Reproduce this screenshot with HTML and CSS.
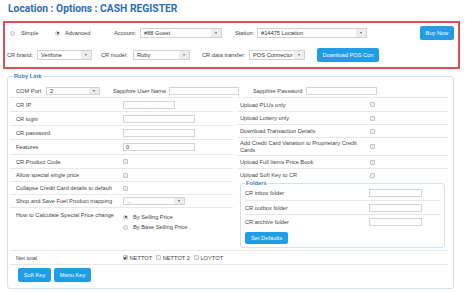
FILE: index.html
```html
<!DOCTYPE html>
<html>
<head>
<meta charset="utf-8">
<link rel="stylesheet" href="styles.css">
</head>
<body>
<h1 class="title">Location : Options : CASH REGISTER</h1>

<div class="redbox">
  <div class="rrow r1">
    <span class="opt o-simple"><span class="radio"></span>Simple</span>
    <span class="opt o-adv"><span class="radio on"></span>Advanced</span>
    <span class="lbl w-acc">Account:</span>
    <span class="sel w-accsel">#88 Guest<i class="arr"></i></span>
    <span class="lbl w-sta">Station:</span>
    <span class="sel w-stasel">#14475 Location<i class="arr"></i></span>
    <span class="btn b-buy">Buy Now</span>
  </div>
  <div class="rrow r2">
    <span class="lbl w-brand">CR brand:</span>
    <span class="sel w-brandsel">Verifone<i class="arr"></i></span>
    <span class="lbl w-model">CR model:</span>
    <span class="sel w-modelsel">Ruby<i class="arr"></i></span>
    <span class="lbl w-dt">CR data transfer:</span>
    <span class="sel w-dtsel">POS Connector<i class="arr"></i></span>
    <span class="btn b-dl">Download POS Con</span>
  </div>
</div>

<div class="group ruby">
  <span class="legend">Ruby Link</span>
  <div class="toprow">
    <span class="lbl w-com">COM Port</span>
    <span class="sel sm w-comsel">2<i class="arr"></i></span>
    <span class="lbl w-sun">Sapphire User Name</span>
    <span class="inp w-suninp"></span>
    <span class="lbl w-spw">Sapphire Password</span>
    <span class="inp w-spwinp"></span>
  </div>
  <div class="cols">
    <div class="col left">
      <div class="row h14"><span class="cell">CR IP</span><span class="inp ip"><i>.</i><i>.</i><i>.</i></span></div>
      <div class="row h14"><span class="cell">CR login</span><span class="inp w-l"></span></div>
      <div class="row h14"><span class="cell">CR password</span><span class="inp w-l"></span></div>
      <div class="row h15"><span class="cell">Features</span><span class="inp w-l">0</span></div>
      <div class="row h14"><span class="cell">CR Product Code</span><span class="cb"></span></div>
      <div class="row h13"><span class="cell">Allow special single price</span><span class="cb"></span></div>
      <div class="row h13"><span class="cell">Collapse Credit Card details to default</span><span class="cb"></span></div>
      <div class="row h13"><span class="cell">Shop and Save Fuel Product mapping</span><span class="sel sm w-shop">...<i class="arr"></i></span></div>
      <div class="row how">
        <span class="cell">How to Calculate Special Price change</span>
        <div class="radios">
          <span class="ropt"><span class="radio on"></span>By Selling Price</span>
          <span class="ropt"><span class="radio"></span>By Base Selling Price</span>
        </div>
      </div>
    </div>
    <div class="col right">
      <div class="row h14"><span class="cell rc">Upload PLUs only</span><span class="cb"></span></div>
      <div class="row h13"><span class="cell rc">Upload Lottery only</span><span class="cb"></span></div>
      <div class="row h13"><span class="cell rc">Download Transaction Details</span><span class="cb"></span></div>
      <div class="row h18"><span class="cell rc"><span class="wrap">Add Credit Card Variation to Proprietary Credit Cards</span></span><span class="cb"></span></div>
      <div class="row h13"><span class="cell rc">Upload Full Items Price Book</span><span class="cb"></span></div>
      <div class="row h13"><span class="cell rc">Upload Soft Key to CR</span><span class="cb"></span></div>
      <div class="group folders">
        <span class="legend">Folders</span>
        <div class="frow first"><span class="fcell">CR inbox folder</span><span class="inp w-f"></span></div>
        <div class="frow"><span class="fcell">CR outbox folder</span><span class="inp w-f"></span></div>
        <div class="frow"><span class="fcell">CR archive folder</span><span class="inp w-f"></span></div>
        <span class="btn b-set">Set Defaults</span>
      </div>
    </div>
  </div>
  <div class="netrow">
    <span class="cell">Net total</span>
    <span class="chk"><span class="cb on"></span>NETTOT</span>
    <span class="chk"><span class="cb"></span>NETTOT 2</span>
    <span class="chk"><span class="cb"></span>LOYTOT</span>
  </div>
  <div class="btnrow">
    <span class="btn b-soft">Soft Key</span>
    <span class="btn b-menu">Menu Key</span>
  </div>
</div>
</body>
</html>
```

FILE: styles.css
```css
* { box-sizing: border-box; }
body {
  margin: 0;
  width: 474px;
  height: 292px;
  overflow: hidden;
  background: #fff;
  font-family: "Liberation Sans", Arial, sans-serif;
  font-size: 5.7px;
  color: #444;
}
.title {
  margin: 0;
  padding-left: 8px;
  height: 21px;
  line-height: 18px;
  font-family: Roboto, "Liberation Sans", sans-serif;
  font-weight: 700;
  font-size: 10.3px;
  color: #2b6db5;
}

/* red box */
.redbox {
  margin-left: 3px;
  width: 457px;
  border: 2px solid #de4e56;
  padding: 3px 4px 5px 2px;
}
.rrow { display: flex; align-items: center; height: 14px; }
.r1 { padding-left: 3px; }
.r2 { margin-top: 8px; }
.lbl { flex: none; white-space: nowrap; }
.opt { display: flex; align-items: center; flex: none; }
.o-simple { width: 45px; }
.o-simple .radio { margin-right: 6px; }
.o-adv { width: 59px; }
.o-adv .radio { margin-right: 5px; }
.w-acc { width: 26px; }
.w-accsel { width: 82px; }
.w-sta { width: 22px; margin-left: 13px; }
.w-stasel { width: 110px; }
.b-buy { width: 34px; margin-left: auto; }
.w-brand { width: 30px; }
.w-brandsel { width: 55px; }
.w-model { width: 32px; margin-left: 9px; }
.w-modelsel { width: 57px; }
.w-dt { width: 47px; margin-left: 12px; }
.w-dtsel { width: 56px; }
.b-dl { width: 62px; margin-left: 12px; }

/* controls */
.radio {
  flex: none;
  width: 5px; height: 5px;
  border-radius: 50%;
  border: 1px solid #c6c6c6;
  background: #ececec;
  display: flex; align-items: center; justify-content: center;
}
.radio.on::after {
  content: "";
  width: 2px; height: 2px;
  border-radius: 50%;
  background: #333;
}
.sel {
  flex: none;
  display: flex; align-items: center;
  height: 10px;
  border: 1px solid #d2d2d2;
  background: #fff;
  padding-left: 3px;
  color: #333;
  white-space: nowrap;
  overflow: hidden;
}
.sel.sm { height: 8px; }
.sel .arr {
  margin-left: auto;
  width: 10px; height: 100%;
  background: #ededed;
  display: flex; align-items: center; justify-content: center;
  flex: none;
}
.sel .arr::after {
  content: "";
  border-left: 1.5px solid transparent;
  border-right: 1.5px solid transparent;
  border-top: 2px solid #666;
}
.inp {
  flex: none;
  display: flex; align-items: center;
  height: 8px;
  border: 1px solid #d4d4d4;
  background: #fff;
  padding-left: 2px;
  color: #333;
}
.cb {
  flex: none;
  width: 5px; height: 5px;
  border: 1px solid #c4c4c4;
  border-radius: 1px;
  background: #f0f0f0;
  display: flex; align-items: center; justify-content: center;
}
.cb.on::after {
  content: "";
  width: 2px; height: 1px;
  border-left: 1px solid #222;
  border-bottom: 1px solid #222;
  transform: rotate(-45deg) translate(0, -0.5px);
}
.btn {
  flex: none;
  display: flex; align-items: center; justify-content: center;
  height: 14px;
  background: #1f9de6;
  color: #fff;
  border-radius: 2px;
  white-space: nowrap;
}

/* fieldsets */
.group {
  position: relative;
  border: 1px solid #d3e2f0;
  border-radius: 3px;
}
.legend {
  position: absolute;
  top: -4px;
  background: #fff;
  padding: 0 1px;
  font-weight: 700;
  color: #3b7bc4;
  line-height: 7px;
}
.ruby {
  margin: 7px 0 0 7px;
  width: 447px;
  padding: 7px 5px 6px 2px;
}
.ruby > .legend { left: 5px; }
.toprow { display: flex; align-items: center; height: 13px; padding-left: 6px; }
.w-com { width: 30px; }
.w-comsel { width: 54px; }
.w-sun { width: 56px; margin-left: 13px; }
.w-suninp { width: 70px; }
.w-spw { width: 53px; margin-left: 14px; }
.w-spwinp { width: 71px; }

.cols { display: grid; grid-template-columns: 223px 211px; column-gap: 4px; }
.col { display: flex; flex-direction: column; }
.row {
  display: flex; align-items: center;
  border-top: 1px solid #e8e8e8;
}
.h13 { height: 13px; }
.h14 { height: 14px; }
.h15 { height: 15px; }
.h18 { height: 18px; }
.cell { flex: none; width: 113px; padding-left: 6px; white-space: nowrap; }
.cell.rc { width: 133px; padding-left: 3px; }
.wrap { display: block; white-space: normal; width: 122px; line-height: 7px; }
.ip { width: 52px; justify-content: space-evenly; padding: 0; color: #aaa; }
.ip i { font-style: normal; line-height: 1; }
.w-l { width: 72px; }
.w-shop { width: 62px; color: #666; }
.how { height: 43px; align-items: flex-start; padding-top: 4px; }
.radios { display: flex; flex-direction: column; }
.ropt { display: flex; align-items: center; height: 10px; }
.ropt .radio { margin-right: 5px; }

.folders {
  margin: 2px 0 0 3px;
  width: 205px;
  padding: 1px 4px 3px 4px;
}
.folders > .legend { left: 4px; }
.frow { display: flex; align-items: center; height: 14px; border-top: 1px solid #e8e8e8; }
.frow.first { border-top: none; height: 15px; }
.fcell { flex: none; width: 124px; }
.w-f { width: 53px; }
.b-set { width: 43px; height: 12px; margin-top: 4px; }

.netrow {
  display: flex; align-items: center;
  height: 15px;
  border-top: 1px solid #e8e8e8;
  border-bottom: 1px solid #e8e8e8;
}
.chk { display: flex; align-items: center; margin-right: 4px; }
.chk .cb { margin-right: 1.5px; }
.btnrow { display: flex; padding-left: 8px; margin-top: 3px; gap: 3px; }
.b-soft { width: 33px; }
.b-menu { width: 37px; }
```
